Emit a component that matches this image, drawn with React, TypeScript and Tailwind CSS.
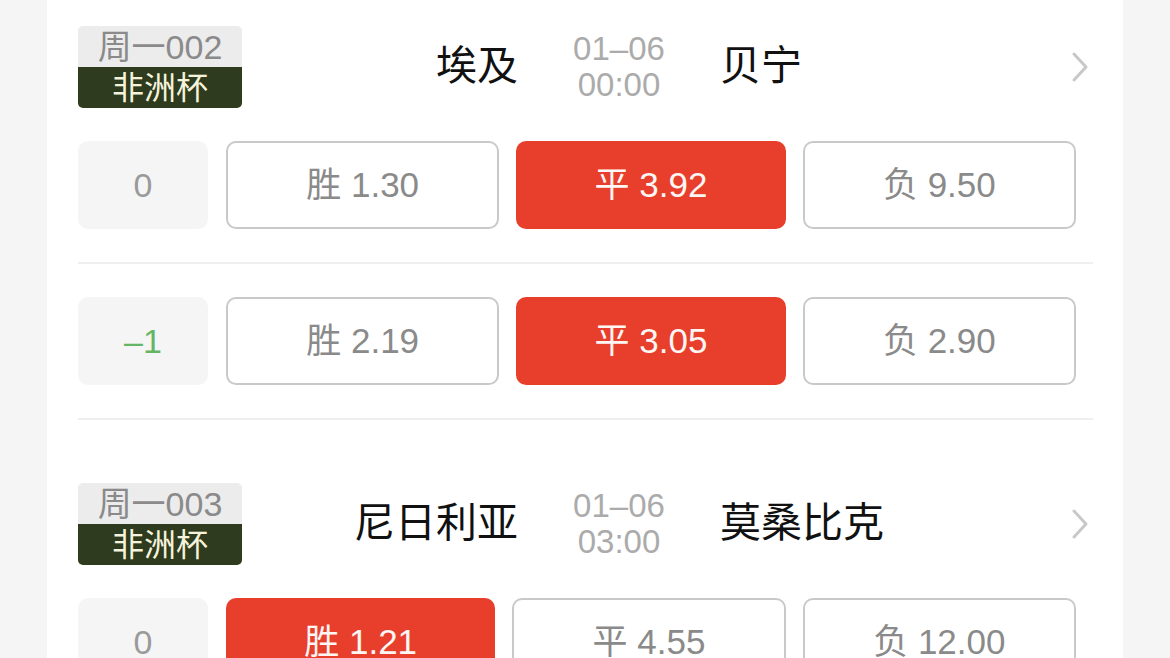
import React from "react";

type Odd = { label: string; value: string; picked?: boolean };
type Line = { handicap: string; odds: Odd[] };
type Match = {
  no: string;
  league: string;
  home: string;
  away: string;
  date: string;
  time: string;
  lines: Line[];
};

const matches: Match[] = [
  {
    no: "周一002",
    league: "非洲杯",
    home: "埃及",
    away: "贝宁",
    date: "01–06",
    time: "00:00",
    lines: [
      {
        handicap: "0",
        odds: [
          { label: "胜", value: "1.30" },
          { label: "平", value: "3.92", picked: true },
          { label: "负", value: "9.50" },
        ],
      },
      {
        handicap: "–1",
        odds: [
          { label: "胜", value: "2.19" },
          { label: "平", value: "3.05", picked: true },
          { label: "负", value: "2.90" },
        ],
      },
    ],
  },
  {
    no: "周一003",
    league: "非洲杯",
    home: "尼日利亚",
    away: "莫桑比克",
    date: "01–06",
    time: "03:00",
    lines: [
      {
        handicap: "0",
        odds: [
          { label: "胜", value: "1.21", picked: true },
          { label: "平", value: "4.55" },
          { label: "负", value: "12.00" },
        ],
      },
    ],
  },
];

function Chevron() {
  return (
    <svg width="18" height="32" viewBox="0 0 18 32" fill="none">
      <polyline
        points="3,3 15,16 3,29"
        stroke="#c8c8c8"
        strokeWidth="3"
        strokeLinecap="round"
        strokeLinejoin="round"
      />
    </svg>
  );
}

function OddsRow({ line }: { line: Line }) {
  const negative = line.handicap.startsWith("–");
  return (
    <div className="flex items-center gap-[17px] pr-[17px]">
      <div
        className={`w-[130px] h-[88px] mr-[1px] rounded-[10px] bg-[#f5f5f5] flex items-center justify-center text-[34px] ${
          negative ? "text-[#66b566]" : "text-[#9a9a9a]"
        }`}
      >
        {line.handicap}
      </div>
      {line.odds.map((o) =>
        o.picked ? (
          <div
            key={o.label}
            className="flex-1 h-[88px] rounded-[10px] bg-[#e83f2c] flex items-center justify-center text-[35px] text-[#fdf6f4]"
          >
            {o.label} {o.value}
          </div>
        ) : (
          <div
            key={o.label}
            className="flex-1 h-[88px] rounded-[10px] border-2 border-[#c9c9c9] bg-white flex items-center justify-center text-[35px] text-[#8a8a8a]"
          >
            {o.label} {o.value}
          </div>
        )
      )}
    </div>
  );
}

function MatchBlock({ match, first }: { match: Match; first: boolean }) {
  return (
    <div className={first ? "pt-[26px]" : "pt-[63px]"}>
      <div className="flex items-center h-[82px] pr-[4px]">
        <div className="w-[164px] h-[82px] flex flex-col rounded-[5px] overflow-hidden">
          <div className="h-[41px] bg-[#ececec] flex items-center justify-center text-[34px] leading-none text-[#8a8a8a]">
            {match.no}
          </div>
          <div className="h-[41px] bg-[#2e3b1e] flex items-center justify-center text-[32px] leading-none text-[#f6f3dc]">
            {match.league}
          </div>
        </div>
        <div className="w-[276px] text-right text-[41px] text-[#111]">{match.home}</div>
        <div className="w-[202px] flex flex-col items-center text-[33px] leading-[36px] text-[#ababab]">
          <span>{match.date}</span>
          <span>{match.time}</span>
        </div>
        <div className="flex-1 text-[41px] text-[#111]">{match.away}</div>
        <Chevron />
      </div>
      <div className="mt-[33px]">
        {match.lines.map((line, i) => (
          <div
            key={i}
            className={i === 0 ? "pb-[33px] border-b-2 border-[#efefef]" : "pt-[33px] pb-[33px] border-b-2 border-[#efefef]"}
          >
            <OddsRow line={line} />
          </div>
        ))}
      </div>
    </div>
  );
}

export default function App() {
  return (
    <div className="w-full h-[658px] overflow-hidden bg-[#f5f5f5] font-['Liberation_Sans','Noto_Sans_CJK_SC',sans-serif]">
      <div className="mx-auto w-[1076px] h-full bg-white pl-[31px] pr-[30px]">
        {matches.map((m, i) => (
          <MatchBlock key={m.no} match={m} first={i === 0} />
        ))}
      </div>
    </div>
  );
}
